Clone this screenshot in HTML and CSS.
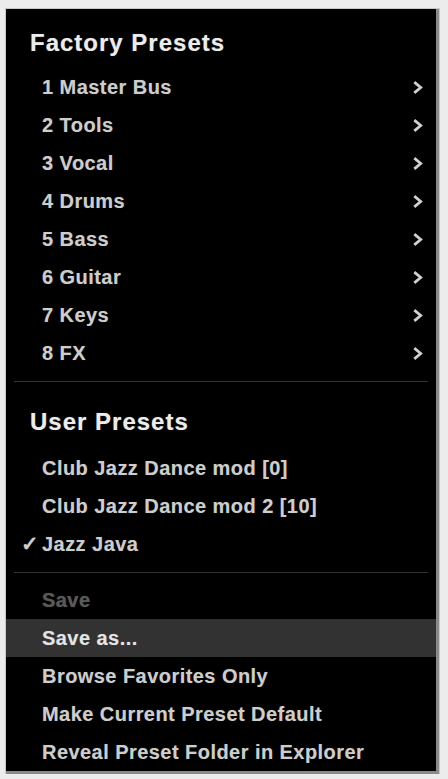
FILE: index.html
```html
<!DOCTYPE html>
<html lang="en">
<head>
    <meta charset="UTF-8">
    <meta name="viewport" content="width=device-width, initial-scale=1.0">
    <title>Preset Menu</title>
    <link rel="stylesheet" href="styles.css">
</head>
<body>
    <div class="menu">
        <div class="heading first">Factory Presets</div>
        <div class="item">1 Master Bus <svg class="chev" viewBox="0 0 10 14"><polyline points="2,2 8,7 2,12"/></svg></div>
        <div class="item">2 Tools <svg class="chev" viewBox="0 0 10 14"><polyline points="2,2 8,7 2,12"/></svg></div>
        <div class="item">3 Vocal <svg class="chev" viewBox="0 0 10 14"><polyline points="2,2 8,7 2,12"/></svg></div>
        <div class="item">4 Drums <svg class="chev" viewBox="0 0 10 14"><polyline points="2,2 8,7 2,12"/></svg></div>
        <div class="item">5 Bass <svg class="chev" viewBox="0 0 10 14"><polyline points="2,2 8,7 2,12"/></svg></div>
        <div class="item">6 Guitar <svg class="chev" viewBox="0 0 10 14"><polyline points="2,2 8,7 2,12"/></svg></div>
        <div class="item">7 Keys <svg class="chev" viewBox="0 0 10 14"><polyline points="2,2 8,7 2,12"/></svg></div>
        <div class="item">8 FX <svg class="chev" viewBox="0 0 10 14"><polyline points="2,2 8,7 2,12"/></svg></div>

        <div class="sep"></div>

        <div class="heading">User Presets</div>
        <div class="item">Club Jazz Dance mod [0]</div>
        <div class="item">Club Jazz Dance mod 2 [10]</div>
        <div class="item checked"><span class="check">✓</span>Jazz Java</div>

        <div class="sep"></div>

        <div class="item disabled">Save</div>
        <div class="item active">Save as...</div>
        <div class="item">Browse Favorites Only</div>
        <div class="item">Make Current Preset Default</div>
        <div class="item">Reveal Preset Folder in Explorer</div>
    </div>
</body>
</html>
```

FILE: styles.css
```css
body {
    margin: 0;
    background: #ececec;
    font-family: "Liberation Sans", Arial, sans-serif;
}
.menu {
    display: flex;
    flex-direction: column;
    margin: 9px 0 0 6px;
    width: 430px;
    padding-top: 15px;
    background: #000;
    border-right: 3px solid #8a8a8a;
    border-bottom: 3px solid #8a8a8a;
    box-shadow: 0 0 0 1px #c8c8c8;
}
.heading {
    height: 38px;
    line-height: 38px;
    padding-left: 24px;
    margin: 13px 0 8px;
    font-size: 24px;
    font-weight: 700;
    letter-spacing: 1px;
    color: #ececec;
    text-shadow: 0 0 1px rgba(255,255,255,0.4);
}
.heading.first {
    margin-top: 0;
    margin-bottom: 6px;
}
.item {
    display: flex;
    align-items: center;
    justify-content: space-between;
    height: 38px;
    padding: 0 13px 0 36px;
    font-size: 20px;
    font-weight: 700;
    letter-spacing: 0.45px;
    color: #cdcdcd;
    text-shadow: 0 0 1px rgba(200,200,200,0.35);
    position: relative;
}
.item.disabled {
    color: #595959;
}
.item.active {
    background: #323232;
    color: #e4e4e4;
}
.check {
    position: absolute;
    left: 15px;
    font-size: 21px;
}
.chev {
    width: 11px;
    height: 15px;
    fill: none;
    stroke: #d0d0d0;
    stroke-width: 2.6;
}
.sep {
    height: 1px;
    margin: 9px 8px 8px;
    background: #333;
}
```
